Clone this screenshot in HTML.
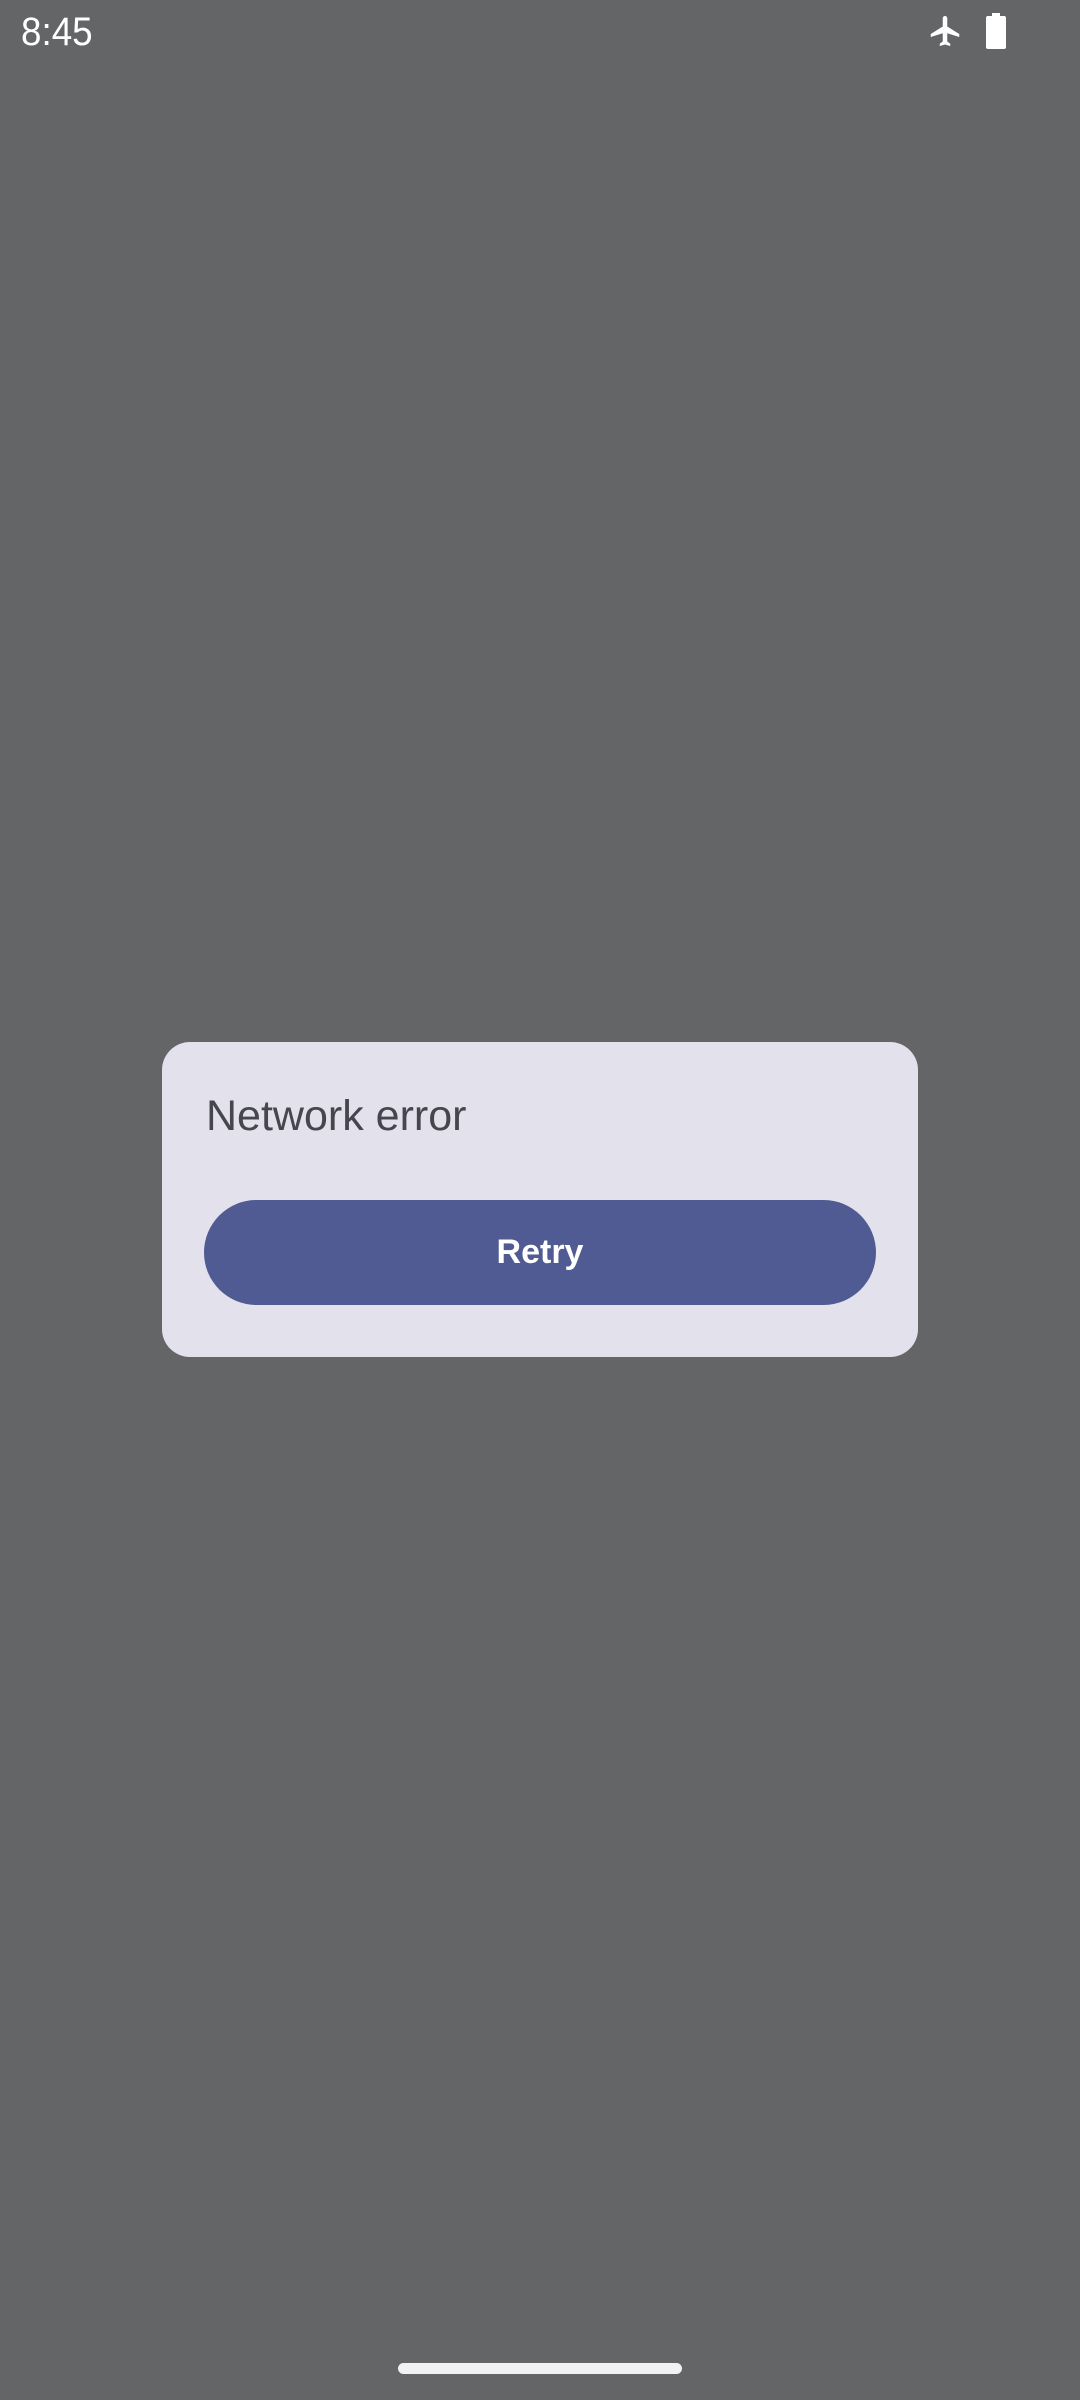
<!DOCTYPE html>
<html><head><meta charset="utf-8"><style>
html,body{margin:0;padding:0}
body{width:1080px;height:2400px;background:#646567;position:relative;overflow:hidden;font-family:"Liberation Sans",sans-serif}
.time{position:absolute;left:21px;top:10px;font-size:40px;color:#fff;transform:scaleX(0.92);transform-origin:left}
.card{position:absolute;left:162px;top:1042px;width:756px;height:315px;background:#e2e1ec;border-radius:28px}
.title{position:absolute;left:206px;top:1092px;font-size:43px;color:#46464f;white-space:nowrap}
.btn{position:absolute;left:204px;top:1200px;width:672px;height:105px;background:#4f5b92;border-radius:53px;color:#fff;font-size:34px;font-weight:bold;text-align:center;line-height:105px}
.home{position:absolute;left:398px;top:2363px;width:284px;height:11px;background:#f2f2f2;border-radius:6px}
</style></head><body>
<div class="time">8:45</div>
<svg style="position:absolute;left:924px;top:13px" width="42" height="36" viewBox="0 0 24 24"><path fill="#fff" d="M21 16v-2l-8-5V3.5C13 2.670 12.330 2 11.5 2S10 2.670 10 3.5V9l-8 5v2l8-2.5V19l-2 1.5V22l3.5-1 3.5 1v-1.5L13 19v-5.5l8 2.5z" transform="translate(0.5,0)"/></svg>
<svg style="position:absolute;left:985px;top:13px" width="22" height="36" viewBox="0 0 22 36"><rect x="7" y="0" width="8" height="4" fill="#fff"/><rect x="1" y="3" width="20" height="33" rx="2" fill="#fff"/></svg>
<div class="card"></div>
<div class="title">Network error</div>
<div class="btn">Retry</div>
<div class="home"></div>
</body></html>
